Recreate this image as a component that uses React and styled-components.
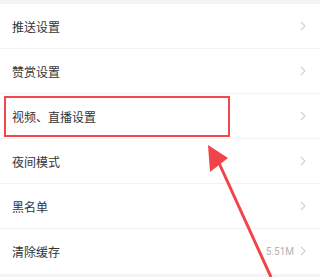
import React from "react";
import styled, { createGlobalStyle } from "styled-components";

const Global = createGlobalStyle`
  html, body { margin: 0; padding: 0; background: #f4f4f4; }
  body { font-family: "Noto Sans CJK SC", "Noto Sans", sans-serif; }
`;

const Page = styled.div`
  position: relative;
  width: 320px;
  height: 277px;
  overflow: hidden;
  background: #f4f4f4;
  padding-top: 4px;
  box-sizing: border-box;
`;

const List = styled.div`
  display: flex;
  flex-direction: column;
  background: #fff;
`;

const Row = styled.div`
  display: flex;
  align-items: center;
  height: 45px;
  padding: 0 12px 0 12px;
  box-sizing: border-box;
  border-bottom: 1px solid ${(p) => (p.last ? "transparent" : "#f3f3f3")};
`;

const Label = styled.span`
  flex: 1;
  font-size: 12px;
  color: #333;
  letter-spacing: 0;
`;

const Value = styled.span`
  font-family: "Roboto", "Liberation Sans", sans-serif;
  font-size: 10px;
  color: #b3b3b3;
  margin-right: 6px;
`;

const Chevron = styled.svg`
  width: 6px;
  height: 10px;
  margin-right: 2px;
`;

const Highlight = styled.div`
  position: absolute;
  left: 4px;
  top: 96px;
  width: 226px;
  height: 41px;
  border: 2px solid #f0484d;
  box-sizing: border-box;
`;

const Arrow = styled.svg`
  position: absolute;
  left: 0;
  top: 0;
  width: 320px;
  height: 277px;
  pointer-events: none;
`;

const items = [
  { label: "推送设置" },
  { label: "赞赏设置" },
  { label: "视频、直播设置" },
  { label: "夜间模式" },
  { label: "黑名单" },
  { label: "清除缓存", value: "5.51M" },
];

export default function App() {
  return (
    <>
      <Global />
      <Page>
        <List>
          {items.map((it, i) => (
            <Row key={it.label} last={i === items.length - 1}>
              <Label>{it.label}</Label>
              {it.value && <Value>{it.value}</Value>}
              <Chevron viewBox="0 0 6 10">
                <path d="M1 1 L5 5 L1 9" fill="none" stroke="#d0d0d0" strokeWidth="1.1" />
              </Chevron>
            </Row>
          ))}
        </List>
        <Highlight />
        <Arrow viewBox="0 0 320 277">
          <line x1="219" y1="163" x2="271" y2="277" stroke="#f0444a" strokeWidth="3" />
          <polygon points="208,145 228,158 210,172" fill="#f0444a" />
        </Arrow>
      </Page>
    </>
  );
}
